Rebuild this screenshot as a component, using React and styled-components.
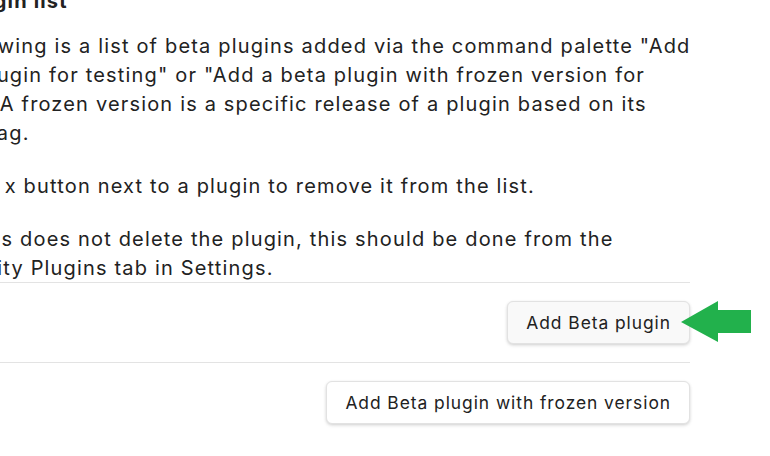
import React from 'react'
import styled, { createGlobalStyle } from 'styled-components'

const GlobalStyle = createGlobalStyle`
  html, body {
    margin: 0;
    padding: 0;
    background: #ffffff;
    overflow: hidden;
  }
  body {
    font-family: Inter, "Noto Sans", sans-serif;
    color: #222222;
  }
`

const Page = styled.div`
  position: relative;
  width: 770px;
  height: 456px;
  overflow: hidden;
`

// the view is scrolled/cropped, so the text block starts left of the window
const Content = styled.div`
  width: ${(p) => 690 + p.$shift}px;
  margin-left: ${(p) => -p.$shift}px;
  margin-top: -13px;
  font-size: 20px;
  letter-spacing: 1.17px;
  line-height: 29px;
`

const Heading = styled.div`
  font-weight: 700;
  margin: 0 0 16px;
`

const Para = styled.p`
  margin: 0 0 24px;
  white-space: nowrap;
  &:last-of-type {
    margin-bottom: -1px;
  }
`

const SettingItem = styled.div`
  display: flex;
  align-items: center;
  justify-content: flex-end;
  padding: 18px 0 18px;
  border-top: 1px solid #e3e3e3;
`

const Button = styled.button`
  height: 43px;
  padding: 0 18px;
  font-family: Inter, "Noto Sans", sans-serif;
  font-size: 17.4px;
  letter-spacing: 0.95px;
  color: #222222;
  background: ${(p) => (p.$hover ? '#f9f9f9' : '#ffffff')};
  border: 1px solid #e2e2e2;
  border-radius: 6px;
  box-shadow: 0 1px 3px rgba(0, 0, 0, 0.14), 0 2px 4px rgba(0, 0, 0, 0.05);
  cursor: pointer;
`

const Arrow = styled.svg`
  position: absolute;
  left: 681px;
  top: 300px;
`

const App = () => {
  return (
    <Page>
      <GlobalStyle />
      <Content $shift={95}>
        <Heading>Beta plugin list</Heading>
        <Para>
          The following is a list of beta plugins added via the command palette "Add
          <br />
          a beta plugin for testing" or "Add a beta plugin with frozen version for
          <br />
          testing". A frozen version is a specific release of a plugin based on its
          <br />
          release tag.
        </Para>
        <Para>Click the x button next to a plugin to remove it from the list.</Para>
        <Para>
          Note: This does not delete the plugin, this should be done from the
          <br />
          Community Plugins tab in Settings.
        </Para>
        <SettingItem>
          <Button $hover>Add Beta plugin</Button>
        </SettingItem>
        <SettingItem>
          <Button>Add Beta plugin with frozen version</Button>
        </SettingItem>
      </Content>
      <Arrow width="72" height="44" viewBox="0 0 72 44">
        <polygon points="0,22 37,1 37,10 70,10 70,33 37,33 37,42" fill="#22b14c" />
      </Arrow>
    </Page>
  )
}

export default App
